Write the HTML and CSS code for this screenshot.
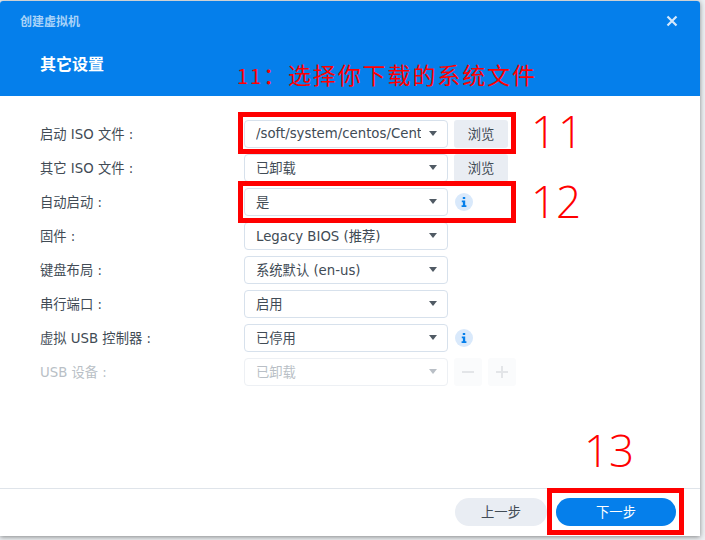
FILE: index.html
```html
<!DOCTYPE html>
<html lang="zh-CN">
<head>
<meta charset="utf-8">
<title>创建虚拟机</title>
<link rel="stylesheet" href="styles.css">
</head>
<body>
<div class="dialog">
  <header class="head">
    <div class="topbar">
      <span class="wintitle">创建虚拟机</span>
      <svg class="close" width="12" height="12" viewBox="0 0 12 12"><path d="M1.5 1.5l9 9M10.5 1.5l-9 9" stroke="#d6e8fb" stroke-width="2.2" fill="none"/></svg>
    </div>
    <h1 class="step">其它设置</h1>
  </header>
  <main class="form">
    <div class="row">
      <label class="lab">启动 ISO 文件 :</label>
      <div class="select"><span class="val">/soft/system/centos/Cent</span><i class="caret"></i></div>
      <button class="btn">浏览</button>
    </div>
    <div class="row">
      <label class="lab">其它 ISO 文件 :</label>
      <div class="select"><span class="val">已卸载</span><i class="caret"></i></div>
      <button class="btn">浏览</button>
    </div>
    <div class="row">
      <label class="lab">自动启动 :</label>
      <div class="select"><span class="val">是</span><i class="caret"></i></div>
      <span class="info"><svg width="6" height="10" viewBox="0 0 6 10"><path d="M1.8 0h2.4v2H1.8zM.8 3.4h3.4v4.8H5.4V10H.6V8.2h1.3V5.2H.8z" fill="#057feb"/></svg></span>
    </div>
    <div class="row">
      <label class="lab">固件 :</label>
      <div class="select"><span class="val">Legacy BIOS (推荐)</span><i class="caret"></i></div>
    </div>
    <div class="row">
      <label class="lab">键盘布局 :</label>
      <div class="select"><span class="val">系统默认 (en-us)</span><i class="caret"></i></div>
    </div>
    <div class="row">
      <label class="lab">串行端口 :</label>
      <div class="select"><span class="val">启用</span><i class="caret"></i></div>
    </div>
    <div class="row">
      <label class="lab">虚拟 USB 控制器 :</label>
      <div class="select"><span class="val">已停用</span><i class="caret"></i></div>
      <span class="info"><svg width="6" height="10" viewBox="0 0 6 10"><path d="M1.8 0h2.4v2H1.8zM.8 3.4h3.4v4.8H5.4V10H.6V8.2h1.3V5.2H.8z" fill="#057feb"/></svg></span>
    </div>
    <div class="row off">
      <label class="lab">USB 设备 :</label>
      <div class="select"><span class="val">已卸载</span><i class="caret"></i></div>
      <button class="mini"><svg width="14" height="14" viewBox="0 0 14 14"><path d="M1 7h12" stroke="#e3e5e8" stroke-width="2"/></svg></button>
      <button class="mini"><svg width="14" height="14" viewBox="0 0 14 14"><path d="M1 7h12M7 1v12" stroke="#e3e5e8" stroke-width="2"/></svg></button>
    </div>
  </main>
  <footer class="foot">
    <button class="pill prev">上一步</button>
    <button class="pill next">下一步</button>
  </footer>
</div>
<div class="mark m1"></div>
<div class="mark m2"></div>
<div class="mark m3"></div>
<div class="note n0"><span class="num">11</span>：选择你下载的系统文件</div>
<div class="note big n1">11</div>
<div class="note big n2">12</div>
<div class="note big n3">13</div>
</body>
</html>
```
FILE: styles.css
```css
* { box-sizing: border-box; }
html, body { margin: 0; height: 100%; }
body {
  width: 705px; height: 540px; overflow: hidden; position: relative;
  background: #eceff2;
  font-family: "DejaVu Sans", "Noto Sans CJK SC", sans-serif;
  color: #414b55;
}
.dialog {
  width: 700px; height: 535px; margin-top: 1px;
  background: #fff; border-radius: 3px 3px 0 0;
  box-shadow: 0 1px 5px rgba(0,0,0,.45);
  display: flex; flex-direction: column;
}
.head { height: 95px; background: #057feb; flex: none; border-radius: 3px 3px 0 0; }
.topbar { height: 40px; display: flex; align-items: center; justify-content: space-between; padding: 0 22px 1px 20px; }
.wintitle { font-size: 12px; font-weight: 700; color: #a9d3f8; }
.step { margin: 12px 0 0 40px; font-size: 16px; line-height: 24px; font-weight: 700; color: #fff; }
.form { flex: 1; padding-top: 24px; display: flex; flex-direction: column; gap: 6px; }
.row { height: 28px; display: flex; align-items: center; padding-left: 40px; font-size: 13.3px; }
.lab { width: 204px; flex: none; padding-bottom: 1px; }
.select {
  width: 204px; height: 28px; flex: none; padding: 0 11px 1px; display: flex; align-items: center; gap: 8px;
  border: 1px solid #d7e1ec; border-radius: 4px; background: #fff;
}
.val { flex: 1; overflow: hidden; white-space: nowrap; }
.caret { flex: none; width: 0; height: 0; margin-right: -1px; border: 4.5px solid transparent; border-top: 5px solid #505a64; border-bottom: 0; }
.btn {
  margin-left: 6px; width: 54px; height: 28px; border: 0; border-radius: 3px; padding: 0 0 1px;
  background: #e9edf3; color: #414b55; font: inherit;
}
.info { margin-left: 7px; width: 18px; height: 18px; border-radius: 50%; background: #d9e9fb; display: flex; align-items: center; justify-content: center; }
.mini { margin-left: 6px; width: 28px; height: 28px; border: 0; border-radius: 3px; background: #fafbfc; padding: 0; display: flex; align-items: center; justify-content: center; }
.off { color: #b9bfc6; }
.off .select { border-color: #edf0f4; }
.off .caret { border-top-color: #b9bfc6; }
.foot {
  height: 48px; flex: none; border-top: 1px solid #dfe4ea; display: flex; justify-content: flex-end; align-items: flex-start; gap: 9px; padding: 9px 24px 0 0;
}
.pill { height: 28px; width: 92px; border: 0; border-radius: 14px; font: inherit; font-size: 13.3px; padding: 0 0 1px; }
.prev { background: #e9edf3; color: #414b55; }
.next { width: 120px; background: #057feb; color: #fff; }
.mark { position: absolute; border: 5px solid #f00; }
.m1 { left: 238px; top: 112px; width: 278px; height: 42px; }
.m2 { left: 238px; top: 181px; width: 278px; height: 42px; }
.m3 { left: 547px; top: 488px; width: 137px; height: 47px; }
.note { position: absolute; color: #f00; font-family: "Noto Sans CJK SC", sans-serif; white-space: nowrap; }
.n0 { left: 237px; top: 58px; font-size: 23px; line-height: 32px; letter-spacing: 1.9px; }
.num { font-size: 20px; }
.big { font-family: "Open Sans", "Noto Sans", sans-serif; font-size: 44px; line-height: 50px; font-weight: 300; }
.n1 { left: 531px; top: 106px; letter-spacing: 2px; }
.n2 { left: 531px; top: 176px; }
.n3 { left: 584px; top: 425px; }
```
